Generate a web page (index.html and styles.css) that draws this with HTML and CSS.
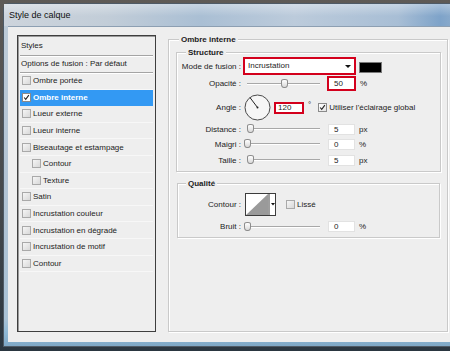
FILE: index.html
```html
<!DOCTYPE html>
<html lang="fr">
<head>
    <meta charset="UTF-8">
    <title>Style de calque</title>
    <link rel="stylesheet" href="styles.css">
</head>
<body>
<div class="screen">
    <div class="window">
        <div class="titlebar">Style de calque</div>
        <div class="content">
            <div class="styles-list">
                <div class="head head-styles">Styles</div>
                <div class="head">Options de fusion : Par défaut</div>
                <div class="item"><span class="check"></span>Ombre portée</div>
                <div class="item selected"><span class="check on"><svg viewBox="0 0 9 9"><path d="M1.5 4.5 L3.5 6.8 L7.5 1.5" /></svg></span>Ombre interne</div>
                <div class="item"><span class="check"></span>Lueur externe</div>
                <div class="item"><span class="check"></span>Lueur interne</div>
                <div class="item"><span class="check"></span>Biseautage et estampage</div>
                <div class="item sub"><span class="check"></span>Contour</div>
                <div class="item sub"><span class="check"></span>Texture</div>
                <div class="item"><span class="check"></span>Satin</div>
                <div class="item"><span class="check"></span>Incrustation couleur</div>
                <div class="item"><span class="check"></span>Incrustation en dégradé</div>
                <div class="item"><span class="check"></span>Incrustation de motif</div>
                <div class="item"><span class="check"></span>Contour</div>
            </div>

            <fieldset class="group outer">
                <legend>Ombre interne</legend>

                <fieldset class="group inner structure">
                    <legend>Structure</legend>
                    <div class="row row-mode">
                        <span class="lbl">Mode de fusion :</span>
                        <div class="select marked">Incrustation<span class="arrow"></span></div>
                        <span class="swatch"></span>
                    </div>
                    <div class="row row-opacity">
                        <span class="lbl">Opacité :</span>
                        <div class="slider"><span class="thumb" style="left: 46%"></span></div>
                        <span class="field marked">50</span>
                        <span class="unit">%</span>
                    </div>
                    <div class="row row-angle">
                        <span class="lbl">Angle :</span>
                        <svg class="dial" viewBox="0 0 27 27">
                            <circle cx="13.5" cy="13.5" r="12.5" />
                            <line x1="13.5" y1="13.5" x2="6" y2="3.6" />
                            <circle class="dot" cx="13.5" cy="13.5" r="1" />
                        </svg>
                        <span class="field marked angle">120</span>
                        <span class="deg">°</span>
                        <span class="check on light"><svg viewBox="0 0 9 9"><path d="M1.5 4.5 L3.5 6.8 L7.5 1.5" /></svg></span>
                        <span class="check-lbl">Utiliser l'éclairage global</span>
                    </div>
                    <div class="row row-distance">
                        <span class="lbl">Distance :</span>
                        <div class="slider"><span class="thumb" style="left: 0%"></span></div>
                        <span class="field">5</span>
                        <span class="unit">px</span>
                    </div>
                    <div class="row row-choke">
                        <span class="lbl">Maigri :</span>
                        <div class="slider"><span class="thumb" style="left: -4%"></span></div>
                        <span class="field">0</span>
                        <span class="unit">%</span>
                    </div>
                    <div class="row row-size">
                        <span class="lbl">Taille :</span>
                        <div class="slider"><span class="thumb" style="left: 0%"></span></div>
                        <span class="field">5</span>
                        <span class="unit">px</span>
                    </div>
                </fieldset>

                <fieldset class="group inner quality">
                    <legend>Qualité</legend>
                    <div class="row row-contour">
                        <span class="lbl">Contour :</span>
                        <svg class="contour" viewBox="0 0 31 23">
                            <rect x="0.5" y="0.5" width="30" height="22" />
                            <polygon points="1,22 23,1 23,22" />
                            <line x1="24" y1="0" x2="24" y2="23" />
                            <polygon class="tri" points="26,10 30,10 28,12.5" />
                        </svg>
                        <span class="check"></span>
                        <span class="check-lbl">Lissé</span>
                    </div>
                    <div class="row row-noise">
                        <span class="lbl">Bruit :</span>
                        <div class="slider"><span class="thumb" style="left: -4%"></span></div>
                        <span class="field">0</span>
                        <span class="unit">%</span>
                    </div>
                </fieldset>
            </fieldset>
        </div>
    </div>
</div>
</body>
</html>
```

FILE: styles.css
```css
* {
    box-sizing: border-box;
}

body {
    margin: 0;
    font-family: "Liberation Sans", Arial, sans-serif;
    font-size: 8px;
    color: #1c1c1c;
    background: #3a3a3a;
}

.screen {
    width: 450px;
    height: 351px;
    overflow: hidden;
    padding: 3px 0 0 3px;
    background: linear-gradient(180deg, #5e5a56 0%, #44484c 60%, #2a3640 100%);
}

/* window frame */
.window {
    width: 470px;
    height: 344px;
    display: flex;
    flex-direction: column;
    border: 1px solid #4e5a66;
    border-right: none;
    border-top-left-radius: 6px;
    padding: 0 0 4px 4px;
    background: linear-gradient(180deg, #bfccd8 0%, #b3c4d4 50%, #a9c2d6 92%, #8fb9d6 96%, #7fa8c6 100%);
}

.titlebar {
    height: 22px;
    line-height: 22px;
    margin-left: -4px;
    padding-left: 5px;
    font-size: 9px;
    color: #101010;
    background:
        linear-gradient(180deg, rgba(255, 255, 255, 0.35), rgba(255, 255, 255, 0) 55%),
        linear-gradient(90deg, #cdd4dc 0%, #c2cdd8 22%, #aabfd4 42%, #bccbdb 62%, #a8bed5 84%, #7ea3c9 93%, #9cb6d0 100%);
}

.content {
    flex: 1;
    display: flex;
    gap: 12px;
    padding: 8px 0 10px 9px;
    border-top: 1px solid #8d9fb2;
    background: #eeeeee;
}

/* left list */
.styles-list {
    width: 139px;
    flex-shrink: 0;
    padding: 0 2px;
    border: 1px solid #3e3e3e;
    box-shadow: inset 1px 1px 0 #9a9a9a;
    background: #eeeeee;
}

.head {
    height: 17px;
    line-height: 16px;
    padding-left: 1px;
    border-bottom: 1px solid #a4a4a4;
    box-shadow: 0 1px 0 #fff;
}

.head-styles {
    height: 20px;
    line-height: 17px;
    padding-top: 1px;
}

.item {
    height: 16.6px;
    display: flex;
    align-items: center;
    gap: 2px;
    padding-left: 2px;
    border-bottom: 1px solid #f7f7f7;
}

.item.sub {
    padding-left: 12px;
}

.item.selected {
    background: #3399f3;
    color: #fff;
    font-weight: bold;
    border-bottom-color: #3399f3;
}

.check {
    width: 9px;
    height: 9px;
    flex-shrink: 0;
    border: 1px solid #a9a9a9;
    background: linear-gradient(135deg, #f6f6f6, #d8d8d8);
    display: inline-flex;
}

.check.on {
    background: #fff;
    border-color: #8a8a8a;
}

.check.light {
    background: linear-gradient(135deg, #ffffff, #e4e4e4);
}

.check svg {
    width: 7px;
    height: 7px;
}

.check path {
    fill: none;
    stroke: #222;
    stroke-width: 1.4;
}

/* group boxes */
.group {
    margin: 0;
    padding: 0;
    min-width: 0;
    border: 1px solid #c9c9c9;
    box-shadow: 1px 1px 0 #fff, inset 1px 1px 0 #fff;
}

.group legend {
    margin-left: 10px;
    padding: 0 2px;
    line-height: 9px;
    font-weight: bold;
    background: #eeeeee;
}

.outer {
    width: 280px;
}

.inner {
    width: 265px;
    margin-left: 7px;
}

.inner legend {
    margin-left: 9px;
}

.structure {
    margin-top: 4px;
    padding-bottom: 5px;
}

.quality {
    margin-top: 7px;
    margin-left: 8px;
    width: 263px;
    padding-bottom: 5px;
}

.quality legend {
    margin-left: 8px;
}

.row {
    display: flex;
    align-items: center;
}

.lbl {
    width: 64px;
    flex-shrink: 0;
    text-align: right;
    white-space: nowrap;
}

.quality .lbl {
    width: 63px;
}

.row-mode { height: 18px; }
.row-opacity { height: 15px; margin-top: 1px; }
.row-angle { height: 27px; margin-top: 3px; }
.row-distance { height: 12px; margin-top: 2px; }
.row-choke { height: 12px; margin-top: 3px; }
.row-size { height: 12px; margin-top: 4px; }
.row-contour { height: 23px; margin-top: 5px; }
.row-noise { height: 11px; margin-top: 5px; }

.select {
    position: relative;
    width: 113px;
    height: 18px;
    margin-left: 2px;
    padding-left: 3px;
    line-height: 14px;
    background: #fff;
}

.select .arrow {
    position: absolute;
    right: 3px;
    top: 6px;
    border-left: 3px solid transparent;
    border-right: 3px solid transparent;
    border-top: 3px solid #111;
}

.swatch {
    width: 23px;
    height: 11px;
    margin-left: 3px;
    margin-top: 2px;
    background: #000;
    border: 1px solid #7a7a7a;
}

.slider {
    position: relative;
    width: 73px;
    height: 2px;
    margin-left: 6px;
    border-top: 1px solid #a8a8a8;
    border-bottom: 1px solid #fff;
}

.thumb {
    position: absolute;
    top: -5px;
    width: 7px;
    height: 9px;
    border: 1px solid #8c8c8c;
    border-radius: 3px 3px 3px 3px / 2px 2px 4px 4px;
    background: linear-gradient(180deg, #ffffff, #d9d9d9);
}

.field {
    width: 27px;
    height: 11px;
    margin-left: 8px;
    padding-left: 5px;
    line-height: 10px;
    background: #fff;
    border: 1px solid #e2e2e2;
}

.field.marked {
    width: 29px;
    height: 15px;
    margin-left: 7px;
    padding-left: 5px;
    line-height: 11px;
}

.field.angle {
    width: 30px;
    height: 12px;
    margin-left: 3px;
    padding-left: 2px;
    line-height: 8px;
}

/* red highlight drawn round the edited values */
.marked,
.field.marked {
    border: 2px solid #d3001c;
}

.unit {
    margin-left: 4px;
}

.deg {
    margin-left: 4px;
    align-self: flex-start;
    margin-top: 6px;
}

.row-angle .check {
    margin-left: 7px;
}

.check-lbl {
    margin-left: 2px;
    white-space: nowrap;
}

.dial {
    width: 27px;
    height: 27px;
    margin-left: 3px;
}

.dial circle {
    fill: #f6f6f6;
    stroke: #4a4a4a;
    stroke-width: 1;
}

.dial line {
    stroke: #222;
    stroke-width: 1;
}

.dial .dot {
    fill: #222;
    stroke: none;
}

.contour {
    width: 31px;
    height: 23px;
    margin-left: 4px;
}

.contour rect {
    fill: #fff;
    stroke: #3c3c3c;
}

.contour polygon {
    fill: #9a9a9a;
}

.contour line {
    stroke: #3c3c3c;
}

.contour .tri {
    fill: #111;
}

.row-contour .check {
    margin-left: 10px;
}
```
